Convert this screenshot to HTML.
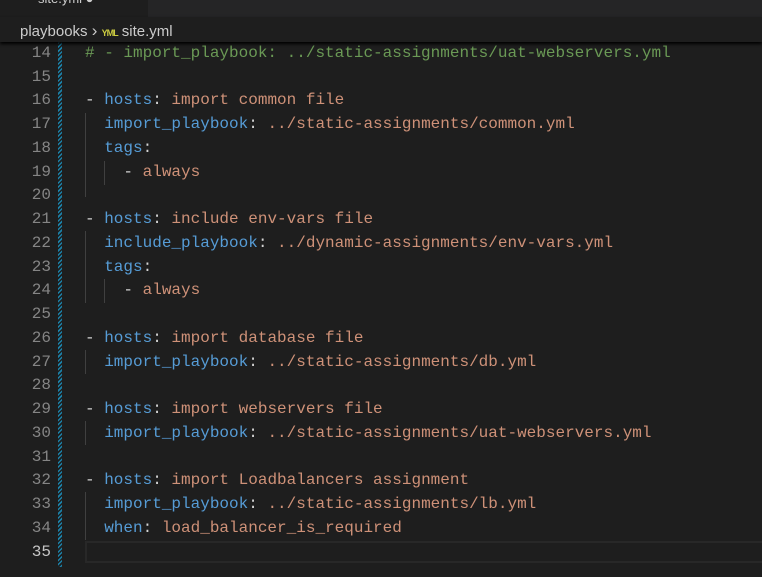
<!DOCTYPE html>
<html><head><style>
body{margin:0;width:762px;height:577px;background:#1e1e1e;overflow:hidden;position:relative;font-family:"Liberation Mono",monospace;}
.tabs{position:absolute;left:0;top:0;width:762px;height:17px;background:#252526;}
.tab{position:absolute;left:0;top:0;width:148px;height:17px;background:#1e1e1e;color:#ccc;font:13px "Liberation Sans",sans-serif;}
.tab span{position:absolute;left:38px;top:-9px;}
.bc{position:absolute;left:0;top:17px;width:762px;height:25px;background:#1e1e1e;box-shadow:0 2px 3px #000;z-index:2;color:#cccccc;font:15px "Liberation Sans",sans-serif;}
.bc .a{position:absolute;left:20px;top:4px;}
.line{position:absolute;left:0;height:24px;line-height:24px;font-size:16px;white-space:pre;width:762px;}
.ln{position:absolute;right:711px;color:#858585;}
.code{position:absolute;left:85px;color:#d4d4d4;}
.k{color:#569cd6}.s{color:#ce9178}.c{color:#6a9955}
.mark{position:absolute;left:58px;top:42px;width:4px;height:525px;background:repeating-linear-gradient(135deg,#1b81a8 0 1.5px,#1e1e1e 1.5px 3px);}
.g{position:absolute;width:1px;background:#404040;}
.cur{position:absolute;left:85px;top:541px;width:680px;height:22px;border:2px solid #282828;box-sizing:border-box;}
</style></head><body>
<div class="tabs"><div class="tab"><span>site.yml ●</span></div></div>
<div class="bc"><span class="a">playbooks <span style="font-size:17px">›</span> <span style="color:#cbcb41;font:bold 9px 'Liberation Sans';letter-spacing:-1px">YML</span> site.yml</span></div>
<div class="mark"></div>
<div class="cur"></div>
<div class="g" style="left:85px;top:113px;height:84px"></div>
<div class="g" style="left:104px;top:161px;height:24px"></div>
<div class="g" style="left:85px;top:231px;height:72px"></div>
<div class="g" style="left:104px;top:279px;height:24px"></div>
<div class="g" style="left:85px;top:350px;height:24px"></div>
<div class="g" style="left:85px;top:421px;height:24px"></div>
<div class="g" style="left:85px;top:492px;height:48px"></div>
<div class="line" style="top:41px"><span class="ln">14</span><span class="code"><span class="c"># - import_playbook: ../static-assignments/uat-webservers.yml</span></span></div>
<div class="line" style="top:65px"><span class="ln">15</span></div>
<div class="line" style="top:88px"><span class="ln">16</span><span class="code">- <span class="k">hosts</span>: <span class="s">import common file</span></span></div>
<div class="line" style="top:112px"><span class="ln">17</span><span class="code">  <span class="k">import_playbook</span>: <span class="s">../static-assignments/common.yml</span></span></div>
<div class="line" style="top:136px"><span class="ln">18</span><span class="code">  <span class="k">tags</span>:</span></div>
<div class="line" style="top:160px"><span class="ln">19</span><span class="code">    - <span class="s">always</span></span></div>
<div class="line" style="top:183px"><span class="ln">20</span></div>
<div class="line" style="top:207px"><span class="ln">21</span><span class="code">- <span class="k">hosts</span>: <span class="s">include env-vars file</span></span></div>
<div class="line" style="top:231px"><span class="ln">22</span><span class="code">  <span class="k">include_playbook</span>: <span class="s">../dynamic-assignments/env-vars.yml</span></span></div>
<div class="line" style="top:255px"><span class="ln">23</span><span class="code">  <span class="k">tags</span>:</span></div>
<div class="line" style="top:278px"><span class="ln">24</span><span class="code">    - <span class="s">always</span></span></div>
<div class="line" style="top:302px"><span class="ln">25</span></div>
<div class="line" style="top:326px"><span class="ln">26</span><span class="code">- <span class="k">hosts</span>: <span class="s">import database file</span></span></div>
<div class="line" style="top:350px"><span class="ln">27</span><span class="code">  <span class="k">import_playbook</span>: <span class="s">../static-assignments/db.yml</span></span></div>
<div class="line" style="top:373px"><span class="ln">28</span></div>
<div class="line" style="top:397px"><span class="ln">29</span><span class="code">- <span class="k">hosts</span>: <span class="s">import webservers file</span></span></div>
<div class="line" style="top:421px"><span class="ln">30</span><span class="code">  <span class="k">import_playbook</span>: <span class="s">../static-assignments/uat-webservers.yml</span></span></div>
<div class="line" style="top:445px"><span class="ln">31</span></div>
<div class="line" style="top:468px"><span class="ln">32</span><span class="code">- <span class="k">hosts</span>: <span class="s">import Loadbalancers assignment</span></span></div>
<div class="line" style="top:492px"><span class="ln">33</span><span class="code">  <span class="k">import_playbook</span>: <span class="s">../static-assignments/lb.yml</span></span></div>
<div class="line" style="top:516px"><span class="ln">34</span><span class="code">  <span class="k">when</span>: <span class="s">load_balancer_is_required</span></span></div>
<div class="line" style="top:540px"><span class="ln" style="color:#c6c6c6">35</span></div>
</body></html>
